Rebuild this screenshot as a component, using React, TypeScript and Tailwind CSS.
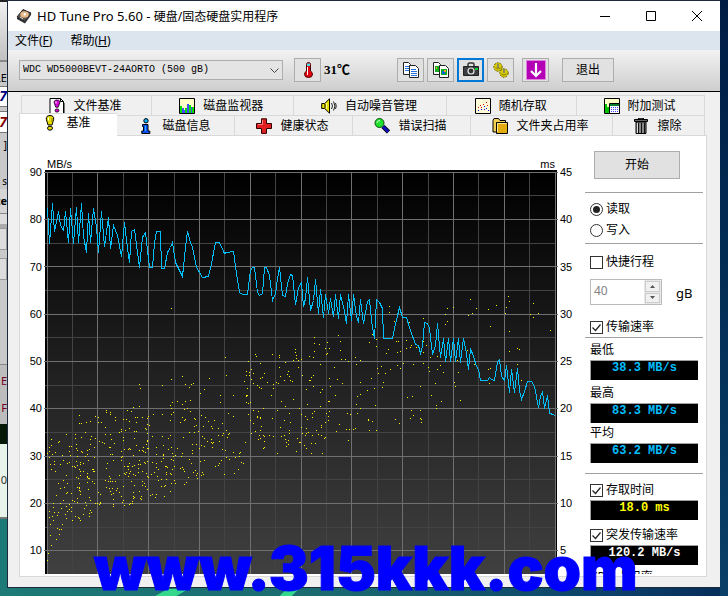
import { useState, type ReactNode } from 'react';
import clsx from 'clsx';

const MAJOR_X = [47, 97, 148, 199, 250, 301, 351, 402, 453, 504, 555];
const MINOR_X = [72, 123, 174, 224, 275, 326, 377, 428, 478, 529];
const MAJOR_Y = [172, 219, 266, 314, 361, 408, 456, 503, 550];
const MINOR_Y = [195, 243, 290, 337, 385, 432, 479, 527];

const SPEED_LINE =
  '47,208 49,243 52,203 54,231 58,211 60,225 63,230 65,211 68,242 70,208 73,243 76,207 78,242 81,203 83,236 86,252 88,213 90,242 93,208 96,227 98,252 101,211 104,246 108,217 110,248 113,225 117,235 121,256 124,222 127,248 129,262 131,231 134,229 139,267 142,237 145,232 149,267 152,267 154,242 156,231 160,231 161,268 164,268 167,252 170,247 172,242 175,262 182,276 185,247 187,231 190,242 192,247 196,267 198,270 202,277 208,276 211,263 215,242 219,242 224,253 226,252 233,251 236,273 239,292 242,294 247,294 250,270 252,267 254,267 257,292 259,295 262,293 264,267 266,267 269,275 272,300 275,293 277,278 279,267 282,295 285,296 287,283 290,274 292,275 295,304 298,287 301,282 303,306 305,298 307,277 310,310 313,300 315,279 318,313 320,289 323,317 325,294 328,313 330,298 333,316 335,294 338,318 340,294 343,306 346,323 348,294 351,320 353,294 356,316 358,322 360,299 363,323 367,301 369,299 371,320 374,338 376,299 379,302 382,308 383,338 392,338 394,328 397,315 399,307 402,317 406,317 410,330 415,344 418,345 420,353 422,346 424,322 427,323 429,328 432,354 435,345 437,323 440,357 443,338 445,361 448,338 450,361 453,338 455,361 458,338 460,362 463,338 466,353 468,369 470,348 473,356 476,366 478,369 480,380 487,380 489,377 491,379 494,380 497,361 499,359 501,376 504,380 506,365 509,392 511,369 514,392 517,368 519,390 521,399 524,391 527,381 531,381 534,386 538,407 540,396 542,391 544,408 547,395 549,413 553,414 555,416';

// access time samples, far seeks
const SAMPLES: number[][] = [
  [389, 306], [389, 312], [394, 321], [409, 322], [423, 318], [447, 308], [447, 321], [445, 314], [445, 324], [429, 327],
  [453, 307], [470, 299], [468, 315], [472, 313], [476, 308], [488, 309], [496, 305], [490, 326], [508, 296], [509, 301],
  [506, 307], [505, 313], [509, 331], [509, 351], [517, 348], [519, 349], [533, 303], [530, 314], [533, 317], [538, 313],
  [550, 330], [517, 364], [521, 380], [505, 373], [490, 368], [488, 369], [467, 350], [469, 361], [474, 364], [489, 383],
  [458, 372], [457, 360], [454, 382], [455, 386], [372, 334], [369, 342], [376, 339], [376, 346], [383, 335], [388, 349],
  [386, 353], [396, 341], [398, 341], [397, 352], [400, 351], [406, 340], [406, 348], [411, 345], [410, 347], [416, 347],
  [423, 341], [423, 352], [426, 345], [423, 363], [413, 364], [430, 357], [437, 356], [439, 349], [428, 367], [429, 371],
  [440, 365], [437, 369], [443, 372], [435, 383], [403, 363], [400, 368], [397, 365], [390, 369], [385, 373], [381, 366],
  [378, 373], [377, 368], [383, 382], [371, 378], [360, 382], [360, 360], [356, 364], [355, 357], [348, 361], [345, 359],
  [341, 359], [340, 350], [340, 341], [338, 335], [334, 367], [337, 379], [342, 383], [330, 386], [329, 378], [329, 348],
  [327, 342], [325, 348], [327, 353], [326, 354], [319, 344], [320, 364], [314, 337], [314, 343], [314, 351], [313, 357],
  [309, 356], [301, 359], [302, 375], [313, 375], [311, 377], [310, 380], [309, 380], [313, 386], [306, 389], [322, 389],
  [320, 392], [335, 395], [360, 394], [357, 396], [367, 390], [374, 388], [382, 387], [420, 386], [460, 400], [441, 401],
  [431, 395], [412, 396], [407, 397], [436, 405], [436, 408], [375, 405], [356, 404], [360, 408], [357, 413], [347, 413],
  [350, 414], [339, 424], [336, 431], [328, 401], [329, 401], [320, 406], [307, 404], [301, 414], [305, 416], [307, 419],
  [312, 413], [314, 411], [312, 417], [329, 411], [326, 413], [328, 416], [328, 420], [325, 422], [321, 425], [321, 427],
  [301, 427], [306, 428], [302, 433], [305, 435], [306, 433], [308, 432], [316, 430], [318, 434], [312, 435], [321, 435],
  [325, 437], [324, 438], [311, 443], [315, 443], [304, 445], [306, 448], [311, 453], [322, 453], [348, 440], [346, 429],
  [349, 429], [353, 429], [355, 428], [368, 419], [368, 420], [372, 421], [369, 430], [376, 430], [395, 419], [399, 423],
  [410, 418], [413, 415], [411, 410], [420, 410], [420, 418], [421, 419], [421, 422], [171, 308], [225, 357], [255, 354],
  [256, 356], [272, 354], [279, 355], [279, 357], [295, 349], [295, 352], [296, 355], [296, 358], [298, 360], [293, 360],
  [285, 362], [248, 361], [260, 363], [279, 367], [298, 367], [251, 369], [246, 371], [249, 372], [249, 375], [246, 375],
  [253, 373], [264, 373], [288, 371], [287, 374], [289, 376], [280, 376], [262, 377], [260, 378], [251, 379], [244, 381],
  [253, 383], [267, 382], [276, 382], [278, 383], [284, 380], [290, 380], [292, 381], [273, 384], [273, 388], [257, 385],
  [259, 387], [261, 388], [247, 388], [226, 375], [209, 378], [182, 376], [171, 379], [162, 385], [185, 384], [189, 387],
  [191, 384], [193, 383], [204, 389], [139, 384], [140, 388], [47, 560], [48, 553], [51, 545], [56, 539], [59, 534],
];

// short seeks are dense: [x from, x to, y top, y bottom at the left, y bottom at the right, count]
const CLUSTERS = [
  [47, 72, 433, 538, 522, 62],
  [72, 97, 412, 525, 514, 82],
  [97, 123, 408, 505, 510, 64],
  [123, 148, 398, 506, 498, 84],
  [148, 174, 392, 500, 494, 56],
  [174, 199, 394, 490, 480, 44],
  [199, 224, 390, 483, 470, 36],
  [224, 250, 390, 478, 465, 28],
  [250, 275, 390, 450, 450, 25],
  [275, 300, 390, 455, 452, 24],
];

function clusterDots() {
  let seed = 90210;
  const rand = () => {
    seed = (seed + 0x6d2b79f5) | 0;
    let t = Math.imul(seed ^ (seed >>> 15), 1 | seed);
    t = (t + Math.imul(t ^ (t >>> 7), 61 | t)) ^ t;
    return ((t ^ (t >>> 14)) >>> 0) / 4294967296;
  };
  return CLUSTERS.flatMap(([x0, x1, top, b0, b1, count]) =>
    Array.from({ length: count }, () => {
      const t = rand();
      const bottom = b0 + (b1 - b0) * t;
      return [Math.round(x0 + (x1 - x0) * t), Math.round(top + (bottom - top) * rand() ** 0.8)];
    }),
  );
}

const DOTS = [...SAMPLES, ...clusterDots()];

function Graph() {
  return (
    <svg viewBox="44 170 514 404" preserveAspectRatio="none" className="block h-[404px] w-full" shapeRendering="crispEdges" role="img" aria-label="传输速率">
      <defs>
        <linearGradient id="plot" x1="0" y1="0" x2="0" y2="1">
          <stop offset="0" stopColor="#000" />
          <stop offset="1" stopColor="#404040" />
        </linearGradient>
      </defs>
      <rect x="45" y="170" width="512" height="404" fill="#000" />
      <rect x="47" y="172" width="509" height="402" fill="url(#plot)" />
      {MINOR_X.map(x => <rect key={x} x={x} y="172" width="1" height="402" fill="#434343" />)}
      {MINOR_Y.map(y => <rect key={y} x="45" y={y} width="511" height="1" fill="#434343" />)}
      {MAJOR_X.map(x => <rect key={x} x={x} y="172" width="1" height="402" fill="#707070" />)}
      {MAJOR_Y.map(y => <rect key={y} x="44" y={y} width="514" height="1" fill="#707070" />)}
      {DOTS.map(([x, y], i) => <rect key={i} x={x} y={y} width="1" height="1" fill="#ff0" />)}
      <polyline points={SPEED_LINE} transform="translate(.5 .5)" fill="none" stroke="#00bfff" strokeWidth="1" />
    </svg>
  );
}

function Icon({ children }: { children: ReactNode }) {
  return <svg viewBox="0 0 16 16" className="size-4 shrink-0" aria-hidden="true">{children}</svg>;
}

const ICONS: Record<string, ReactNode> = {
  file: (
    <>
      <path d="M1 .5h10.500l3 3v12H1z" fill="#fff" stroke="#000" />
      <path d="M11.500.5v3h3" fill="none" stroke="#000" />
      <path d="M15.500 5v11H3" fill="none" stroke="#777" />
      <path d="M8 2C5.800 2 4.800 3.200 5.200 4.800L6.800 9.200h2.400l1.600-4.400C11.200 3.200 10.200 2 8 2z" fill="#d800d8" stroke="#000" strokeWidth=".8" />
      <ellipse cx="8" cy="12.500" rx="2" ry="1.600" fill="#d800d8" stroke="#000" strokeWidth=".8" />
      <path d="M7 3.500v2" stroke="#fff" />
    </>
  ),
  monitor: (
    <>
      <path d="M.5.5h15v15H.5z" fill="#ffffc8" stroke="#000" />
      <path d="M1 8h2v7H1zm5 2h2v5H6zm3-3h3v8H9zm4 2h2v6h-2z" fill="#00e000" />
      <path d="M3 10h2v5H3zm2 2h1v3H5zm3-6h2v9H8zm4 3h1v6h-1z" fill="#4848ff" />
    </>
  ),
  sound: (
    <>
      <path d="M.7 5.500h3L8.500.8v14.400L3.700 10.500h-3z" fill="#e8e000" stroke="#000" />
      <path d="M4 6v4" stroke="#000" />
      <path d="M5.500 5v6" stroke="#fff89a" />
      <path d="M10.500 5q2 3 0 6M12.500 3.500q3 4.500 0 9M14.500 5q1.500 3 0 6" fill="none" stroke="#222" />
    </>
  ),
  random: (
    <>
      <path d="M.5.5h15v15H.5z" fill="#fffbd8" stroke="#000" />
      <path d="M3 9h1v1H3zm2-2h1v1H5zm3-1h1v1H8zm3-2h1v1h-1zm1 3h1v1h-1zM6 9h1v1H6z" fill="#e00000" />
      <path d="M3 12h1v1H3zm3-1h1v1H6zm3 0h1v1H9zm2-1h1v1h-1zm2 2h1v1h-1zM9 8h1v1H9z" fill="#0000e0" />
    </>
  ),
  extra: (
    <>
      <path d="M.5.5h15v15H.5z" fill="#ffffc8" stroke="#000" />
      <path d="M1 6h2v9H1zm2 3h2v6H3z" fill="#00c000" />
      <path d="M5.500 5.500h10v10h-10z" fill="#fff" stroke="#000" />
      <path d="M6 6h9v2H6z" fill="#0a7a30" />
      <path d="M7.500 9v6m2-6v6m2-6v6m2-6v6" stroke="#4040ff" strokeDasharray="1 1" />
    </>
  ),
  bang: (
    <>
      <path d="M8 .5C5.200.5 4 2 4.300 4.200L6 10h4l1.700-5.800C12 2 10.800.5 8 .5z" fill="#e6dc00" stroke="#000" />
      <ellipse cx="8" cy="13.200" rx="2.500" ry="2" fill="#e6dc00" stroke="#000" />
      <path d="M6.500 2.500v3" stroke="#fff" />
      <path d="M10 3v4" stroke="#8a8400" />
    </>
  ),
  info: (
    <>
      <circle cx="8" cy="2.800" r="2.200" fill="#00b0ff" stroke="#000" />
      <path d="M4.500 6.500h5.500v6.500h1.800v2.500h-8V13h1.700V8.500h-1z" fill="#0a50f0" stroke="#000" />
      <path d="M7.500 8v5" stroke="#38b0ff" />
    </>
  ),
  health: (
    <>
      <path d="M5.500.8h5v4.700h5v5h-5v4.900h-5v-4.900h-5v-5h5z" fill="#e02020" stroke="#300" />
      <path d="M6.500 2v4.500H2" fill="none" stroke="#ff8080" />
    </>
  ),
  scan: (
    <>
      <path d="M9 8.500l5.500 5.500" stroke="#000" strokeWidth="4.500" />
      <path d="M9 8.500l5.300 5.300" stroke="#1010c0" strokeWidth="2.800" />
      <circle cx="5.500" cy="5" r="4.500" fill="#20e030" stroke="#085008" />
      <path d="M3 5q0-2.500 3-2.500" fill="none" stroke="#c8ffc8" />
    </>
  ),
  folder: (
    <>
      <path d="M1 14V2.500l1-2h4.500l1.500 2h5.500V14z" fill="#f0d050" stroke="#000" />
      <path d="M4.500 4.500h11v11h-11z" fill="#e0ac10" stroke="#000" />
      <path d="M5.500 14V5.500h9" fill="none" stroke="#ffe88a" />
    </>
  ),
  erase: (
    <>
      <path d="M1.500 1.500h13v2h-13zM5.500 0h5v1.500h-5z" fill="#666" stroke="#000" />
      <path d="M3 4h10v11.500H3z" fill="#888" stroke="#000" />
      <path d="M5.500 5v10m3-10v10m3-10v10" stroke="#111" />
      <path d="M4.500 5v10" stroke="#ddd" />
    </>
  ),
};

const TABS_BACK = [
  ['file', '文件基准'],
  ['monitor', '磁盘监视器'],
  ['sound', '自动噪音管理'],
  ['random', '随机存取'],
  ['extra', '附加测试'],
];

const TABS_FRONT = [
  ['bang', '基准'],
  ['info', '磁盘信息'],
  ['health', '健康状态'],
  ['scan', '错误扫描'],
  ['folder', '文件夹占用率'],
  ['erase', '擦除'],
];

function Tab({ icon, label, active }: { icon: string; label: string; active?: boolean }) {
  return (
    <button
      type="button"
      role="tab"
      aria-selected={!!active}
      className={clsx(
        'flex items-center justify-center gap-2 border-[#d9d9d9] leading-4 whitespace-nowrap',
        active ? 'relative z-10 -mt-0.5 -mb-px border-t border-l bg-white pr-1 pb-1' : 'border-t border-r pr-0.5',
      )}
    >
      <Icon>{ICONS[icon]}</Icon>
      {label}
    </button>
  );
}

function ToolButton({ label, focused, children }: { label: string; focused?: boolean; children: ReactNode }) {
  return (
    <button
      type="button"
      aria-label={label}
      className={clsx(
        'flex h-6 w-[27px] shrink-0 items-center justify-center bg-[#e1e1e1]',
        focused ? 'border-2 border-[#0078d7]' : 'border border-[#adadad]',
      )}
    >
      {children}
    </button>
  );
}

function Toolbar() {
  return (
    <div className="flex h-[42px] items-center border-b border-black bg-linear-to-b from-[#f2f2f2] to-[#cecece] pr-4 pb-0.5 pl-[11px]">
      <div className="relative">
        <select aria-label="硬盘" className="block h-5 w-[264px] appearance-none border border-[#adadad] bg-[#e4e4e4] pl-[3px] font-['Liberation_Mono','Noto_Sans_CJK_SC',monospace] text-[10px] text-black">
          <option>WDC WD5000BEVT-24AORTO (500 gB)</option>
        </select>
        <svg viewBox="0 0 9 5" className="pointer-events-none absolute top-2 right-1 h-[5px] w-[9px]" aria-hidden="true">
          <path d="M.5.500l4 4 4-4" fill="none" stroke="#444" />
        </svg>
      </div>
      <div className="ml-[11px] flex items-center gap-[3px]">
        <ToolButton label="温度">
          <Icon>
            <path d="M6.500 2.500q0-2 2-2t2 2V9q2 1.200 2 3.200 0 3.300-4 3.300t-4-3.300Q4.500 10.200 6.500 9z" fill="#e00010" stroke="#500" />
            <path d="M7 1.500h3V4H7z" fill="#50e0e8" />
            <path d="M7.500 5v8" stroke="#fff" />
          </Icon>
        </ToolButton>
        <span className="w-[70px] font-['Liberation_Serif','Noto_Sans_CJK_SC',serif] text-[13px] leading-4 font-bold">31℃</span>
        <ToolButton label="复制文本">
          <Icon>
            <path d="M.5.5h5l2 2v10h-7z" fill="#fff" stroke="#222" />
            <path d="M2 4.500h4m-4 2h4m-4 2h4" stroke="#2070e0" />
            <path d="M6.500 3.500h6l3 3v9h-9z" fill="#fff" stroke="#222" />
            <path d="M8 7.500h5m-5 2h6m-6 2h6m-6 2h6" stroke="#2070e0" />
          </Icon>
        </ToolButton>
        <ToolButton label="复制图像">
          <Icon>
            <path d="M.5.5h5l2 2v10h-7z" fill="#fff" stroke="#222" />
            <path d="M2 4h4v6H2z" fill="#10b020" />
            <path d="M6.500 3.500h6l3 3v9h-9z" fill="#fff" stroke="#222" />
            <path d="M8 7h6v6H8z" fill="#10b020" />
            <path d="M9 9h3v3H9z" fill="#1060e0" />
            <path d="M11 8h2v2h-2zM3 5h1v2H3z" fill="#f0a020" />
          </Icon>
        </ToolButton>
        <ToolButton label="截图" focused>
          <Icon>
            <path d="M5 4V2.500Q5 1 6.500 1h3Q11 1 11 2.500V4" fill="none" stroke="#333" strokeWidth="1.500" />
            <path d="M.5 4.500h15v9H.5z" fill="#3a3e42" stroke="#222" />
            <circle cx="8" cy="9" r="3.600" fill="#e8e8e8" />
            <circle cx="8" cy="9" r="2.400" fill="#333" />
            <path d="M12 6h3v2h-3z" fill="#00d030" />
          </Icon>
        </ToolButton>
        <ToolButton label="选项">
          <Icon>
            <circle cx="5" cy="5" r="4.200" fill="#d8cc00" stroke="#6b6400" strokeDasharray="2 1" />
            <circle cx="11" cy="11" r="4.200" fill="#d8cc00" stroke="#6b6400" strokeDasharray="2 1" />
            <path d="M5 2v4M11 7v4" stroke="#777" strokeWidth="1.500" />
            <path d="M2.500 5.500q2 2.500 5 .5M8.500 12q2.500 2 5 0" fill="none" stroke="#8a8200" />
          </Icon>
        </ToolButton>
        <span className="w-0.5" />
        <ToolButton label="保存">
          <svg viewBox="0 0 20 20" className="size-5 shrink-0" aria-hidden="true">
            <path d="M.5.5h19v19H.5z" fill="#b400b4" stroke="#e080e0" />
            <path d="M10 3v13M5 11l5 5 5-5" fill="none" stroke="#fff" strokeWidth="2.200" />
          </svg>
        </ToolButton>
      </div>
      <button type="button" className="ml-[13px] h-6 w-[52px] border border-[#adadad] bg-[#e1e1e1] leading-4">退出</button>
    </div>
  );
}

function Readout({ value, className }: { value: string; className: string }) {
  return (
    <output className={clsx(
      "mr-[5px] ml-[5px] block h-5 border-t border-l border-[#a0a0a0] bg-black text-center font-['Liberation_Mono',monospace] text-[12px] leading-[14px] font-bold",
      className,
    )}>
      {value}
    </output>
  );
}

function Option({ type, label, checked, onChange }: { type: 'radio' | 'checkbox'; label: string; checked: boolean; onChange: () => void }) {
  return (
    <label className="flex h-5 items-center gap-[3px] pl-[5px] leading-4 whitespace-nowrap">
      <span className="relative flex size-[13px]">
        <input
          type={type}
          name={type === 'radio' ? 'mode' : undefined}
          checked={checked}
          onChange={onChange}
          className={clsx('size-[13px] appearance-none border border-[#333] bg-white', type === 'radio' && 'rounded-full')}
        />
        {checked && type === 'radio' && <span className="pointer-events-none absolute inset-[3px] rounded-full bg-[#222]" />}
        {checked && type === 'checkbox' && (
          <svg viewBox="0 0 13 13" className="pointer-events-none absolute inset-0" aria-hidden="true">
            <path d="M2.500 6.500l3 3 5-6" fill="none" stroke="#222" strokeWidth="1.200" />
          </svg>
        )}
      </span>
      {label}
    </label>
  );
}

function Sidebar() {
  const [mode, setMode] = useState('read');
  const [shortStroke, setShortStroke] = useState(false);
  const [transfer, setTransfer] = useState(true);
  const [access, setAccess] = useState(true);
  const [burst, setBurst] = useState(true);

  return (
    <aside className="mr-[3px] h-[438px] w-[118px] shrink-0 overflow-hidden pt-[15px]">
      <button type="button" className="ml-[9px] block h-7 w-[86px] border border-[#adadad] bg-[#e1e1e1] leading-4">开始</button>

      <div className="mt-[13px] flex flex-col gap-px border-y border-[#a0a0a0] pt-1.5 pb-[3px]">
        <Option type="radio" label="读取" checked={mode === 'read'} onChange={() => setMode('read')} />
        <Option type="radio" label="写入" checked={mode === 'write'} onChange={() => setMode('write')} />
      </div>

      <div className="border-b border-[#a0a0a0] pt-2">
        <Option type="checkbox" label="快捷行程" checked={shortStroke} onChange={() => setShortStroke(!shortStroke)} />
        <div className="mt-[7px] mb-3 flex items-center pl-[5px]">
          <div className="flex h-[26px] w-[72px] border border-[#bbb] bg-white">
            <input type="text" aria-label="快捷行程容量" defaultValue="40" disabled className="w-[53px] pb-0.5 pl-[3px] text-[#838383]" />
            <div className="flex flex-1 flex-col gap-px bg-[#e8e8e8] p-px">
              <button type="button" aria-label="增加" className="flex flex-1 items-center justify-center border border-[#ccc] bg-[#f0f0f0]">
                <svg viewBox="0 0 5 3" className="h-[3px] w-[5px]"><path d="M0 3l2.500-3L5 3z" fill="#555" /></svg>
              </button>
              <button type="button" aria-label="减少" className="flex flex-1 items-center justify-center border border-[#ccc] bg-[#f0f0f0]">
                <svg viewBox="0 0 5 3" className="h-[3px] w-[5px]"><path d="M0 0l2.500 3L5 0z" fill="#555" /></svg>
              </button>
            </div>
          </div>
          <span className="ml-[14px] pt-0.5 text-[13px] leading-4">gB</span>
        </div>
        <Option type="checkbox" label="传输速率" checked={transfer} onChange={() => setTransfer(!transfer)} />
      </div>

      <div className="border-b border-[#a0a0a0] pt-0.5 pb-2.5">
        <div className="h-5 pl-[5px] leading-5">最低</div>
        <Readout value="38.3 MB/s" className="text-[#00bfff]" />
        <div className="mt-[3px] h-5 pl-[5px] leading-5">最高</div>
        <Readout value="83.3 MB/s" className="text-[#00bfff]" />
        <div className="h-5 pl-[5px] leading-5">平均</div>
        <Readout value="63.2 MB/s" className="text-[#00bfff]" />
      </div>

      <div className="pt-1.5">
        <Option type="checkbox" label="存取时间" checked={access} onChange={() => setAccess(!access)} />
        <Readout value="18.0 ms" className="text-[#ff0]" />
        <div className="h-[5px]" />
        <Option type="checkbox" label="突发传输速率" checked={burst} onChange={() => setBurst(!burst)} />
        <Readout value="120.2 MB/s" className="text-white" />
        <div className="mt-1 pl-[5px] leading-4 whitespace-nowrap">CPU 占用率</div>
      </div>
    </aside>
  );
}

function Scale({ values, className }: { values: number[]; className: string }) {
  return (
    <div className={clsx('flex h-[420px] flex-col justify-between pt-[30px]', className)}>
      {values.map(v => <span key={v} className="h-3 leading-3">{v}</span>)}
    </div>
  );
}

function TitleBar() {
  return (
    <header className="flex h-[30px] items-center bg-white pl-2">
      <svg viewBox="0 0 16 16" className="size-4" aria-hidden="true">
        <path d="M1 9L7 1.500l8 3.500-6 8.500z" fill="#5c5450" stroke="#222" />
        <path d="M1 9l8 4.500v2L1 11zM9 13.500L15 5v2l-6 8.500z" fill="#2c2c30" />
        <ellipse cx="8.500" cy="6.500" rx="4.200" ry="3.200" fill="#e8b888" />
        <circle cx="8.800" cy="6.300" r="1.200" fill="#fff" />
        <path d="M4 9l3 2" stroke="#ddd" />
      </svg>
      <h1 className="ml-[5px] flex-1 leading-4 whitespace-nowrap">
        <span className="text-[13px]">HD Tune Pro 5.60 - </span>硬盘/固态硬盘实用程序
      </h1>
      <div className="flex">
        <button type="button" aria-label="最小化" className="flex h-[30px] w-[46px] items-center justify-center">
          <svg viewBox="0 0 10 10" className="size-2.5"><path d="M0 5.500h10" stroke="#000" /></svg>
        </button>
        <button type="button" aria-label="最大化" className="flex h-[30px] w-[46px] items-center justify-center">
          <svg viewBox="0 0 10 10" className="size-2.5"><path d="M.5.5h9v9h-9z" fill="none" stroke="#000" /></svg>
        </button>
        <button type="button" aria-label="关闭" className="flex h-[30px] w-[46px] items-center justify-center">
          <svg viewBox="0 0 10 10" className="size-2.5"><path d="M0 0l10 10M10 0L0 10" stroke="#000" /></svg>
        </button>
      </div>
    </header>
  );
}

// edge of the program that sits behind the main window
function BackWindow() {
  return (
    <div className="flex w-[7px] shrink-0 flex-col overflow-hidden text-[11px] whitespace-nowrap">
      <div className="flex flex-col bg-[#c9c9c9]">
        <div className="h-[62px] border-t-2 border-b-2 border-t-[#222] border-b-[#888] bg-linear-to-b from-[#f0f0f0] to-[#c0c0c0]" />
        <div className="flex h-[25px] justify-end border-b border-[#777] pt-2">LE</div>
        <div className="flex h-5 justify-end border-b border-[#777] bg-white text-[14px] leading-[18px] font-bold text-[#000080] italic">7</div>
        <div className="mt-1 flex h-[22px] justify-end border-y border-[#777] bg-white text-[14px] leading-5 font-bold text-[#800000] italic">7</div>
        <div className="flex h-[56px] flex-col items-end justify-between pt-1 leading-4">
          <span>]</span>
          <span className="text-[10px]">s</span>
        </div>
        <div className="flex h-[25px] justify-end border-b border-[#888] bg-[#d5d5d5] leading-6 font-bold">te</div>
        <div className="h-[14px] border-b-4 border-[#aaa] bg-[#ddd]" />
        <div className="h-[22px] border border-l-0 border-[#999] bg-[#ddd]" />
        <div className="h-[8px]" />
        <div className="h-[22px] border border-l-0 border-[#999] bg-[#ddd]" />
        <div className="h-[85px] border-b border-[#888]" />
        <div className="flex h-[59px] flex-col items-end justify-between bg-[#bdbdbd] pt-2 pb-2 leading-4 text-[#700020]">
          <span>E</span>
          <span>F</span>
        </div>
        <div className="h-[20px] bg-[#061806]" />
        <div className="flex h-[75px] items-center justify-end border-b-2 border-[#777] bg-[#e8f3ea] text-[#333]">10</div>
      </div>
    </div>
  );
}

export default function App() {
  return (
    <div className="relative flex h-screen w-full overflow-hidden bg-[linear-gradient(90deg,#1d7a76_0%,#1a6a70_45%,#0b3f68_85%,#052c58_100%)] font-['Noto_Sans','Noto_Sans_CJK_SC',sans-serif] text-[12px] text-black">
      <BackWindow />
      <main className="flex min-w-0 flex-1 flex-col self-start border-t border-b border-l border-[#1c2a3c] bg-[#f0f0f0]">
        <TitleBar />
        <nav className="flex h-[19px] items-center gap-[18px] bg-[#dce4ed] pl-[7px]">
          <button type="button" className="leading-4">文件(<u>F</u>)</button>
          <button type="button" className="leading-4">帮助(<u>H</u>)</button>
        </nav>
        <Toolbar />
        <div className="pt-[3px] pr-[13px] pb-2.5 pl-[11px]">
          <div role="tablist" className="mr-0.5">
            <div className="ml-0.5 grid h-5 grid-cols-[130fr_142fr_154fr_130fr_128fr] border-l border-[#d9d9d9]">
              {TABS_BACK.map(([icon, label]) => <Tab key={label} icon={icon} label={label} />)}
            </div>
            <div className="grid h-5 grid-cols-[98fr_118fr_118fr_118fr_142fr_92fr]">
              {TABS_FRONT.map(([icon, label], i) => <Tab key={label} icon={icon} label={label} active={i === 0} />)}
            </div>
          </div>
          <section className="flex border border-[#d9d9d9] bg-white pb-0.5">
            <Scale values={[90, 80, 70, 60, 50, 40, 30, 20, 10]} className="w-6 items-end pr-0.5 font-['Liberation_Sans',sans-serif] text-[11px]" />
            <div className="min-w-0 flex-1">
              <div className="flex h-[34px] items-end justify-between pr-[3px] pl-[3px] font-['Liberation_Sans',sans-serif] text-[11px] leading-[11px]">
                <span>MB/s</span>
                <span>ms</span>
              </div>
              <Graph />
            </div>
            <Scale values={[45, 40, 35, 30, 25, 20, 15, 10, 5]} className="w-[27px] items-start pl-0.5 font-['Liberation_Sans',sans-serif] text-[11px]" />
            <Sidebar />
          </section>
        </div>
      </main>
      <div className="w-2 shrink-0 bg-linear-to-b from-[#001c45] to-[#0a4068]" />
      <svg viewBox="0 0 180 8" className="absolute bottom-0 left-[144px] h-[7px] w-[180px]" aria-hidden="true">
        <path d="M0 8L14 0h24L24 8zM142 8l8-8h14l-8 8z" fill="#34d88a" />
      </svg>
      <div className="pointer-events-none absolute bottom-0 left-[94px] font-['Inter',sans-serif] text-[60px] leading-[56px] font-black whitespace-nowrap text-[#00f] [-webkit-text-stroke:1px_#00f]">
        www.315kkk.com
      </div>
    </div>
  );
}
